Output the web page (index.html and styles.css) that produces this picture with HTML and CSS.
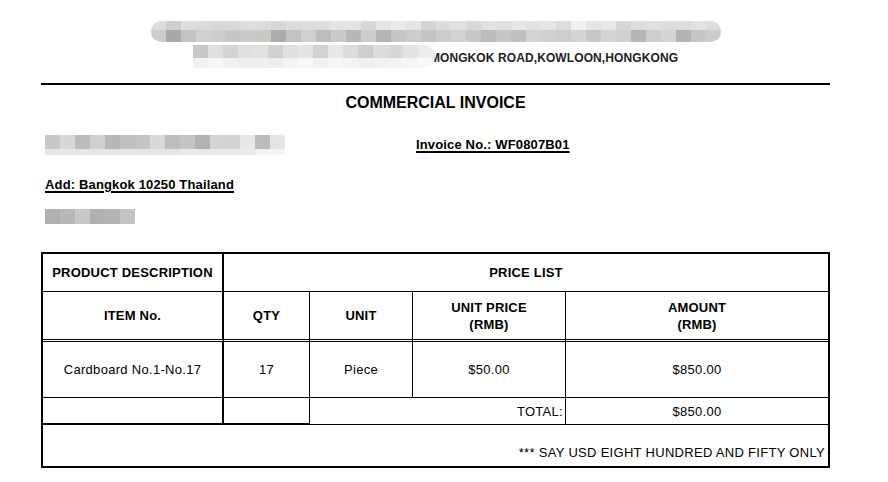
FILE: index.html
```html
<!DOCTYPE html>
<html lang="en">
<head>
<meta charset="utf-8">
<title>Commercial Invoice</title>
<link rel="stylesheet" href="styles.css">
</head>
<body>
<div class="page">
  <div class="hdr-line1"><span class="mosaic m1" aria-hidden="true"></span></div>
  <div class="hdr-line2"><span class="mosaic m2" aria-hidden="true"></span><span class="addr">MONGKOK ROAD,KOWLOON,HONGKONG</span></div>
  <div class="rule"></div>
  <h1 class="title">COMMERCIAL INVOICE</h1>
  <div class="meta-row">
    <span class="mosaic m3" aria-hidden="true"></span>
    <span class="invno">Invoice No.: WF0807B01</span>
  </div>
  <div class="add">Add: Bangkok 10250 Thailand</div>
  <div class="mosaic m4" aria-hidden="true"></div>

  <table class="inv">
    <colgroup>
      <col class="c1"><col class="c2"><col class="c3"><col class="c4"><col class="c5">
    </colgroup>
    <tr class="r1">
      <th class="first">PRODUCT DESCRIPTION</th>
      <th class="last" colspan="4">PRICE LIST</th>
    </tr>
    <tr class="r2">
      <th class="first">ITEM No.</th>
      <th>QTY</th>
      <th>UNIT</th>
      <th>UNIT PRICE<br>(RMB)</th>
      <th class="last">AMOUNT<br>(RMB)</th>
    </tr>
    <tr class="r3">
      <td class="first">Cardboard No.1-No.17</td>
      <td>17</td>
      <td>Piece</td>
      <td>$50.00</td>
      <td class="last">$850.00</td>
    </tr>
    <tr class="r4">
      <td class="first thick-b"></td>
      <td class="thick-b"></td>
      <td class="total-label" colspan="2">TOTAL:</td>
      <td class="last">$850.00</td>
    </tr>
    <tr class="r5">
      <td class="say" colspan="5">*** SAY USD EIGHT HUNDRED AND FIFTY ONLY</td>
    </tr>
  </table>
</div>
</body>
</html>
```

FILE: styles.css
```css
html, body {
  margin: 0;
  padding: 0;
  background: #fff;
}
body {
  font-family: "Liberation Sans", Arial, sans-serif;
  color: #000;
}
.page {
  width: 789px;
  margin-left: 41px;
}

/* pixelated (redacted) blocks */
.mosaic {
  display: block;
  background-repeat: no-repeat;
}
.hdr-line1 {
  display: flex;
  justify-content: center;
  padding-top: 21px;
}
.m1 {
  width: 570px;
  height: 21px;
  border-radius: 10px;
  background-image:
    linear-gradient(to right, #dcdcdc 0 15px, #cfcfcf 15px 30px, #dedede 30px 45px, #dbdbdc 45px 60px, #d9d9d9 60px 75px, #d9d9d9 75px 90px, #dddde0 90px 105px, #dedcda 105px 120px, #d5d6d8 120px 135px, #dcdcde 135px 150px, #dedede 150px 165px, #dedede 165px 180px, #e5e5e5 180px 195px, #e3e3e3 195px 210px, #d7d7d7 210px 225px, #e5e5e5 225px 240px, #eaeaea 240px 255px, #e6e4e2 255px 270px, #d4d5d8 270px 285px, #dcdcdc 285px 300px, #e0e0e0 300px 315px, #d8d8d8 315px 330px, #e2e2e2 330px 345px, #e0e0e0 345px 360px, #e6e6e6 360px 375px, #e2e2e2 375px 390px, #e6e6e6 390px 405px, #dcdcdc 405px 420px, #f0f0f2 420px 435px, #e6e6e6 435px 450px, #e8e8e8 450px 465px, #d6d6d6 465px 480px, #dcdde0 480px 495px, #e0e0e0 495px 510px, #dcdcdc 510px 525px, #dcdde0 525px 540px, #e2e2e2 540px 555px, #dcdcdc 555px 570px),
    linear-gradient(to right, #cdcdcd 0 15px, #a9a9a9 15px 30px, #c3c3c3 30px 45px, #cfd0d2 45px 60px, #cdcdcd 60px 75px, #c9c7c4 75px 90px, #cacbcd 90px 105px, #cbc9c6 105px 120px, #abadab 120px 135px, #c0c4c6 135px 150px, #d0d0d0 150px 165px, #bdbdbf 165px 180px, #cdcbc9 180px 195px, #b7b8ba 195px 210px, #cdcdcd 210px 225px, #b4b5b7 225px 240px, #c9c6c3 240px 255px, #cdcdcf 255px 270px, #c3c6c8 270px 285px, #cccccc 285px 300px, #d2d2d2 300px 315px, #c8c8c8 315px 330px, #bcbcbc 330px 345px, #c6c6c6 345px 360px, #c0c0c0 360px 375px, #d2d4d6 375px 390px, #d0d0d0 390px 405px, #cecece 405px 420px, #d4d4d4 420px 435px, #c8c8c8 435px 450px, #d4d4d4 450px 465px, #d0d0d0 465px 480px, #b8b6b4 480px 495px, #ccced2 495px 510px, #d6d4d2 510px 525px, #b4b4b4 525px 540px, #c4c6c8 540px 555px, #cccccc 555px 570px);
  background-size: 100% 9px, 100% 12px;
  background-position: top left, bottom left;
}
.hdr-line2 {
  display: flex;
  justify-content: center;
  align-items: flex-start;
  margin-top: 3px;
  height: 23px;
}
.m2 {
  position: relative;
  z-index: 1;
  width: 242px;
  height: 23px;
  margin-right: -5px;
  border-radius: 0 12px 12px 0;
  background-image:
    linear-gradient(to right, #c8c8c8 0 15px, #e0e0e0 15px 30px, #d4d4d4 30px 45px, #e0e0e0 45px 60px, #e2e2e2 60px 75px, #cfd2d2 75px 90px, #e0e0e0 90px 105px, #e4e4e4 105px 120px, #d2d2d2 120px 135px, #e6e8ea 135px 150px, #dcdcdc 150px 165px, #ccced0 165px 180px, #dcdcdc 180px 195px, #d8d8d8 195px 210px, #e4e4e4 210px 225px, #ececec 225px 242px),
    linear-gradient(to right, #f2f2f2 0 15px, #f6f6f6 15px 30px, #f2f2f2 30px 45px, #f0f0f0 45px 60px, #f0f0f0 60px 75px, #eeeeee 75px 90px, #f4f4f4 90px 105px, #f8f8f8 105px 120px, #f2f2f2 120px 135px, #f6f6f6 135px 150px, #f4f4f4 150px 165px, #f0f0f0 165px 180px, #f2f2f2 180px 195px, #f4f4f4 195px 210px, #f6f6f6 210px 225px, #f8f8f8 225px 242px);
  background-size: 100% 13px, 100% 10px;
  background-position: top left, bottom left;
}
.addr {
  margin-top: 6px;
  font-size: 12px;
  line-height: 14px;
  font-weight: bold;
  color: #222;
  letter-spacing: 0.1px;
}
.rule {
  margin-top: 15px;
  border-top: 2px solid #000;
}
.title {
  margin: 8px 0 0;
  font-size: 16px;
  line-height: 19px;
  font-weight: bold;
  text-align: center;
}
.meta-row {
  display: flex;
  align-items: flex-start;
  margin-top: 23px;
  height: 20px;
}
.m3 {
  width: 240px;
  height: 20px;
  margin-left: 4px;
  background-image:
    linear-gradient(to right, #c8c8c8 0 15px, #d8d8d8 15px 30px, #bcbcbc 30px 45px, #d0d0d0 45px 60px, #b8b8b8 60px 75px, #c0c0c0 75px 90px, #c4c4c4 90px 105px, #dadada 105px 120px, #bebebe 120px 135px, #c4c4c4 135px 150px, #b2b2b2 150px 165px, #d4d4d4 165px 180px, #d2d2d2 180px 195px, #e8e8e8 195px 210px, #bcbcbc 210px 225px, #e6e6e6 225px 240px),
    linear-gradient(to right, #e6e6e6 0 135px, #eaeaea 135px 210px, #f4f4f4 210px 240px);
  background-size: 100% 14px, 100% 6px;
  background-position: top left, bottom left;
}
.invno {
  margin-left: 131px;
  margin-top: 2px;
  font-size: 13px;
  line-height: 15px;
  font-weight: bold;
  text-decoration: underline;
  text-decoration-thickness: 2px;
  text-underline-offset: 2px;
  letter-spacing: 0.15px;
}
.add {
  margin-top: 22px;
  margin-left: 4px;
  font-size: 13px;
  line-height: 15px;
  font-weight: bold;
  text-decoration: underline;
  text-decoration-thickness: 2px;
  text-underline-offset: 2px;
  letter-spacing: 0.15px;
}
.m4 {
  margin-top: 17px;
  margin-left: 4px;
  width: 90px;
  height: 15px;
  background-image: linear-gradient(to right, #b0b0b0 0 15px, #b8b8b8 15px 30px, #c8c8c8 30px 45px, #b0b0b0 45px 60px, #b4b4b4 60px 75px, #c4c4c4 75px 90px);
}

/* invoice table */
.inv {
  margin-top: 28px;
  width: 789px;
  box-sizing: border-box;
  table-layout: fixed;
  border-collapse: separate;
  border-spacing: 0;
  border: 2px solid #000;
  font-size: 13px;
  line-height: 17px;
}
.c1 { width: 181px; }
.c2 { width: 86px; }
.c3 { width: 103px; }
.c4 { width: 153px; }
.c5 { width: 262px; }
.inv th, .inv td {
  box-sizing: border-box;
  padding: 0;
  border-right: 1px solid #000;
  border-bottom: 1px solid #000;
  text-align: center;
  vertical-align: middle;
}
.inv th {
  font-weight: bold;
  letter-spacing: 0.2px;
}
.inv td {
  font-weight: normal;
  letter-spacing: 0.3px;
}
.inv .first { border-right-width: 2px; }
.inv .last { border-right: 0; }
.r1 { height: 38px; }
.r2 { height: 50px; }
.r2 th { border-bottom: 3px double #000; }
.r3 { height: 56px; }
.r4 { height: 27px; }
.r4 .thick-b { border-bottom-width: 2px; }
.r4 .total-label {
  text-align: right;
  padding-right: 2px;
}
.r5 { height: 41px; }
.inv .say {
  border: 0;
  text-align: right;
  vertical-align: bottom;
  padding: 0 3px 5px 0;
}
```
